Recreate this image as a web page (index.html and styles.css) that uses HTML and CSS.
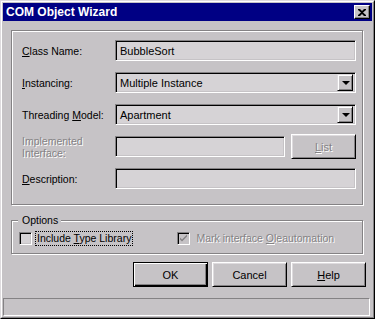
FILE: index.html
```html
<!DOCTYPE html>
<html lang="en">
<head>
  <meta charset="UTF-8" />
  <title>COM Object Wizard</title>
  <link rel="stylesheet" href="styles.css">
</head>
<body>
<div class="window">
  <div class="frame">
    <div class="titlebar">
      <span class="title">COM Object Wizard</span>
      <span class="close">
        <svg width="8" height="7" viewBox="0 0 8 7"><path d="M0 0h2l2 2l2-2h2v1l-3 2.5l3 2.5v1h-2l-2-2l-2 2h-2v-1l3-2.5l-3-2.5z" fill="#000"/></svg>
      </span>
    </div>

    <div class="group main">
      <div class="row">
        <label class="lbl"><u>C</u>lass Name:</label>
        <div class="field">BubbleSort</div>
      </div>
      <div class="row">
        <label class="lbl"><u>I</u>nstancing:</label>
        <div class="field combo"><span class="value">Multiple Instance</span><span class="drop"><i class="arrow"></i></span></div>
      </div>
      <div class="row">
        <label class="lbl">Threading <u>M</u>odel:</label>
        <div class="field combo"><span class="value">Apartment</span><span class="drop"><i class="arrow"></i></span></div>
      </div>
      <div class="row">
        <label class="lbl disabled two">Implemented<br>Interface:</label>
        <div class="field short"></div>
        <div class="btn list disabled"><u>L</u>ist</div>
      </div>
      <div class="row">
        <label class="lbl"><u>D</u>escription:</label>
        <div class="field"></div>
      </div>
    </div>

    <div class="group options">
      <span class="legend">Options</span>
      <div class="check-row">
        <span class="check"></span>
        <span class="check-label focused">Include <u>T</u>ype Library</span>
        <span class="check checked-off">
          <svg width="9" height="9" viewBox="0 0 9 9"><path d="M1 3.5l2 2l5-5v2l-5 5l-2-2z" fill="#848284"/></svg>
        </span>
        <span class="check-label disabled">Mark interface <u>O</u>leautomation</span>
      </div>
    </div>

    <div class="buttons">
      <div class="btn default">OK</div>
      <div class="btn">Cancel</div>
      <div class="btn"><u>H</u>elp</div>
    </div>

    <div class="status"></div>
  </div>
</div>
</body>
</html>
```

FILE: styles.css
```css
body { margin: 0; padding: 0; background: #c6c3c6; font-family: "Liberation Sans", Arial, sans-serif; font-size: 10.5px; color: #000; }
u { text-decoration: underline; text-underline-offset: 1px; }

.window { box-sizing: border-box; width: 375px; height: 319px; border: 1px solid; border-color: #dedbde #000 #000 #dedbde; background: #c6c3c6; }
.frame { box-sizing: border-box; height: 100%; border: 1px solid; border-color: #fff #848284 #848284 #fff; padding: 1px; display: flex; flex-direction: column; }

.titlebar { height: 18px; background: #000084; display: flex; align-items: center; justify-content: space-between; padding: 0 2px 0 3px; }
.title { color: #fff; font-weight: bold; font-size: 12px; }
.close { box-sizing: border-box; width: 16px; height: 14px; background: #c6c3c6; border: 1px solid; border-color: #fff #000 #000 #fff; box-shadow: inset -1px -1px 0 #848284; display: flex; align-items: center; justify-content: center; }

.group { border: 1px solid #848284; box-shadow: inset 1px 1px 0 #fff, 1px 1px 0 #fff; margin-left: 8px; width: 352px; box-sizing: border-box; }
.main { margin-top: 9px; padding: 9px 6px 15px 10px; display: flex; flex-direction: column; gap: 11px; }
.row { height: 21px; display: flex; align-items: center; }
.lbl { width: 93px; flex: none; }
.lbl.two { line-height: 12px; }
.disabled { color: #848284; text-shadow: 1px 1px 0 #fff; }

.field { box-sizing: border-box; width: 241px; height: 21px; background: #d6d3d6; border: 1px solid; border-color: #848284 #fff #fff #848284; box-shadow: inset 1px 1px 0 #000, inset -1px -1px 0 #c6c3c6; padding: 2px 3px 0 4px; line-height: 16px; font-size: 11px; }
.field.short { width: 170px; }
.combo { display: flex; justify-content: space-between; padding: 2px 2px 2px 4px; }
.combo .value { line-height: 16px; }
.drop { box-sizing: border-box; width: 16px; height: 17px; margin-top: -1px; background: #c6c3c6; border: 1px solid; border-color: #dedbde #000 #000 #dedbde; box-shadow: inset 1px 1px 0 #fff, inset -1px -1px 0 #848284; display: flex; align-items: center; justify-content: center; }
.arrow { width: 0; height: 0; border-left: 4px solid transparent; border-right: 4px solid transparent; border-top: 4px solid #000; margin-left: 1px; }

.btn { box-sizing: border-box; width: 75px; height: 25px; background: #c6c3c6; border: 1px solid; border-color: #fff #000 #000 #fff; box-shadow: inset 1px 1px 0 #dedbde, inset -1px -1px 0 #848284; display: flex; align-items: center; justify-content: center; font-size: 11px; }
.btn.list { width: 65px; margin-left: 6px; flex: none; }
.btn.default { border-color: #000; box-shadow: inset 1px 1px 0 #fff, inset -1px -1px 0 #000, inset -2px -2px 0 #848284; }

.options { position: relative; margin-top: 15px; padding: 10px 6px 7px 7px; }
.legend { position: absolute; left: 6px; top: -7px; padding: 0 3px 0 4px; background: #c6c3c6; line-height: 13px; }
.check-row { height: 15px; display: flex; align-items: center; }
.check { box-sizing: border-box; width: 13px; height: 13px; flex: none; background: #d6d3d6; border: 1px solid; border-color: #848284 #fff #fff #848284; box-shadow: inset 1px 1px 0 #000, inset -1px -1px 0 #c6c3c6; display: flex; align-items: center; justify-content: center; }
.check.checked-off { background: #c6c3c6; margin-left: 45px; }
.check-label { margin-left: 4px; padding: 0 1px; line-height: 13px; }
.check-label.focused { outline: 1px dotted #000; }
.check-label.disabled { margin-left: 5px; }

.buttons { display: flex; justify-content: flex-end; gap: 4px; margin-top: 8px; padding-right: 6px; }

.status { margin-top: auto; height: 18px; margin-right: 2px; box-sizing: border-box; border: 1px solid; border-color: #848284 #fff #fff #848284; }
```
